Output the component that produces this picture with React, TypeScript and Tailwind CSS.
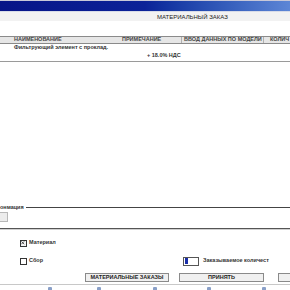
import React from "react";

const F = { fontFamily: '"Liberation Sans", Arial, sans-serif' } as React.CSSProperties;

export default function App() {
  return (
    <div className="w-[290px] h-[290px] bg-white overflow-hidden flex flex-col relative" style={F}>
      {/* title bar */}
      <div className="h-[1px] bg-[#c8c8d8]" />
      <div className="h-[10px] bg-gradient-to-r from-[#071487] via-[#0c2298] to-[#5d86d6]" />
      <div className="h-[1px] bg-[#d8dce8]" />
      <div className="h-[9px] bg-[#f2f2f2] flex items-center pl-[157px] text-[6px] leading-none text-[#222]">
        МАТЕРИАЛЬНЫЙ ЗАКАЗ
      </div>
      <div className="h-[15px]" />
      {/* header */}
      <div className="h-[8px] border-t border-b border-[#8a8a8a] bg-[#e6e6e6] flex items-center text-[5.5px] font-bold leading-none text-[#444] whitespace-nowrap">
        <div className="w-[100px] pl-[14px]">НАИМЕНОВАНИЕ</div>
        <div className="w-[82px] pl-[22px] border-r border-[#b0b0b0] h-full flex items-center">ПРИМЕЧАНИЕ</div>
        <div className="w-[82px] pl-[2px] border-r border-[#b0b0b0] h-full flex items-center">ВВОД ДАННЫХ ПО МОДЕЛИ</div>
        <div className="pl-[6px]">КОЛИЧ</div>
      </div>
      <div className="h-[17px] relative text-[5.5px] font-bold leading-none text-[#333] whitespace-nowrap">
        <div className="absolute left-[14px] top-[1px]">Фильтрующий элемент с проклад.</div>
        <div className="absolute left-[147px] top-[9px]">+ 18.0% НДС</div>
      </div>
      <div className="h-[1px] bg-[#9a9a9a]" />
      <div className="h-[143px]" />
      {/* group box */}
      <div className="h-[5px] flex items-center">
        <span className="text-[5.5px] leading-none font-bold text-[#333] pr-[2px]">онмация</span>
        <div className="flex-1 h-[1px] bg-[#444]" />
      </div>
      <div className="h-[18px] flex items-start pt-[2px]">
        <div className="w-[8px] h-[10px] border border-[#b8b8b8] bg-[#ececec] border-l-0" />
      </div>
      <div className="h-[1px] bg-[#555]" />
      <div className="h-[1px] bg-[#d0d0d0]" />
      <div className="h-[9px]" />
      {/* checkboxes */}
      <div className="h-[8px] flex items-center pl-[20px] gap-[2px]">
        <div className="w-[7px] h-[7px] border border-[#333] bg-[#f4f4f4] relative">
          <svg viewBox="0 0 7 7" className="absolute inset-0 w-[5px] h-[5px]">
            <path d="M0.5 0.5L4.5 4.5M4.5 0.5L0.5 4.5" stroke="#222" strokeWidth="1" />
          </svg>
        </div>
        <span className="text-[5.5px] leading-none font-bold text-[#333]">Материал</span>
      </div>
      <div className="h-[9px]" />
      <div className="h-[10px] flex items-center">
        <div className="flex items-center pl-[20px] gap-[2px] w-[183px]">
          <div className="w-[7px] h-[7px] border border-[#333] bg-white" />
          <span className="text-[5.5px] leading-none font-bold text-[#333]">Сбор</span>
        </div>
        <div className="w-[16px] h-[9px] border border-[#555] bg-white flex items-center pl-[1px]">
          <div className="w-[3px] h-[6px] bg-[#1a2ea8]" />
        </div>
        <span className="pl-[4px] text-[5.5px] leading-none font-bold text-[#333] whitespace-nowrap">Заказываемое количест</span>
      </div>
      <div className="h-[7px]" />
      {/* buttons */}
      <div className="h-[9px] flex items-center">
        <div className="w-[85px]" />
        <div className="w-[84px] h-[9px] border border-[#8a8a8a] bg-[#f0f0f0] flex items-center justify-center text-[5.5px] leading-none font-bold text-[#222] whitespace-nowrap">
          МАТЕРИАЛЬНЫЕ ЗАКАЗЫ
        </div>
        <div className="w-[10px]" />
        <div className="w-[85px] h-[9px] border border-[#8a8a8a] bg-[#f0f0f0] flex items-center justify-center text-[5.5px] leading-none font-bold text-[#222]">
          ПРИНЯТЬ
        </div>
        <div className="w-[14px]" />
        <div className="flex-1 h-[9px] border border-[#8a8a8a] border-r-0 bg-[#f0f0f0]" />
      </div>
      <div className="h-[2px]" />
      <div className="h-[1px] bg-[#c8c8c8]" />
      <div className="flex-1 relative">
        {[48, 97, 153, 207, 262].map((x) => (
          <div key={x} className="absolute top-[2px] w-[4px] h-[4px] bg-[#8aa0c8] rounded-[1px]" style={{ left: x }} />
        ))}
      </div>
    </div>
  );
}
